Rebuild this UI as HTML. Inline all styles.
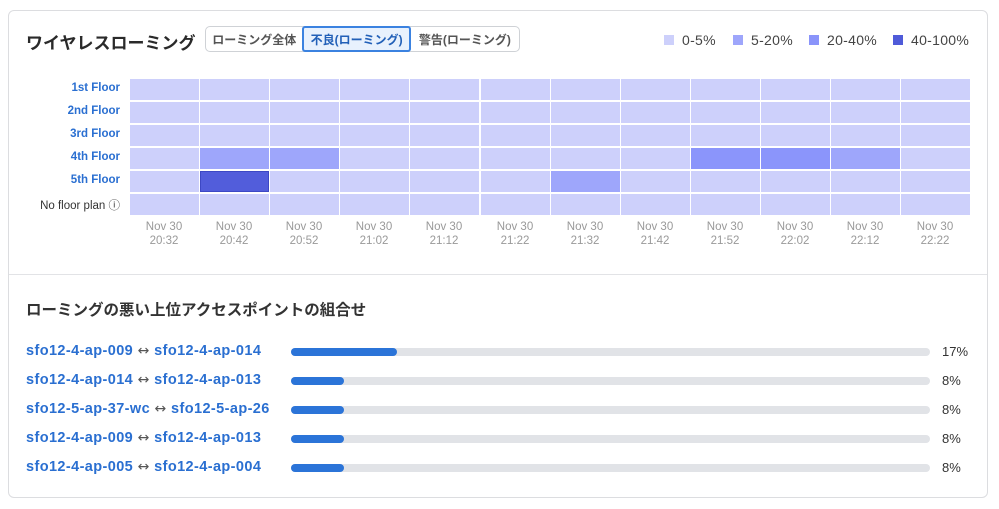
<!DOCTYPE html>
<html><head><meta charset="utf-8"><style>
body{margin:0;width:999px;height:509px;background:#fff;font-family:"Liberation Sans","Noto Sans CJK JP",sans-serif;position:relative;overflow:hidden}
.card{position:absolute;left:8px;top:10px;width:980px;height:488px;border:1px solid #dcdde0;border-radius:6px;box-sizing:border-box}
.abs{position:absolute}
.title{left:26px;top:29px;font-size:17px;font-weight:bold;color:#2a2a2a}
.seg{left:205px;top:26px;height:26px;width:315px;border:1px solid #cfd2d6;border-radius:5px;box-sizing:border-box;display:flex;font-size:12px;font-weight:bold;color:#555}
.seg div{display:flex;align-items:center;justify-content:center}
.seg .on{border:2px solid #3b82e0;background:#e8f1fd;color:#2260b8;border-radius:3px;margin:-1px 0}
.leg{top:32px;font-size:14px;color:#444;display:flex;align-items:center;letter-spacing:0.3px}
.leg span{display:inline-block;width:10px;height:10px;margin-right:8px}
.cell{position:absolute;height:21px;width:69px;background:#cdd0fb}
.fl{position:absolute;right:879px;font-size:11.5px;font-weight:bold;color:#2a6fd1;text-align:right;white-space:nowrap}
.tm{position:absolute;top:220px;width:70px;text-align:center;font-size:11.5px;color:#999;line-height:14px}
.row{position:absolute;left:26px;font-size:14.5px;font-weight:bold;color:#2a6fd1;white-space:nowrap;letter-spacing:0.4px}
.row i{font-style:normal;color:#555;font-weight:normal;font-family:"DejaVu Sans",sans-serif;font-size:14px}
.bar{position:absolute;left:291px;width:639px;height:8px;border-radius:4px;background:#e1e3e7}
.bar b{display:block;height:8px;border-radius:4px;background:#2b74d8}
.pc{position:absolute;left:942px;font-size:13px;color:#333}
</style></head><body>
<div class="card"></div>
<div class="abs title">ワイヤレスローミング</div>
<div class="abs seg"><div style="width:98px">ローミング全体</div><div class="on" style="width:106px">不良(ローミング)</div><div style="width:110px">警告(ローミング)</div></div>
<div class="abs leg" style="left:664px"><span style="background:#cdd0fb"></span>0-5%</div>
<div class="abs leg" style="left:733px"><span style="background:#9ea6fb"></span>5-20%</div>
<div class="abs leg" style="left:809px"><span style="background:#8a94fa"></span>20-40%</div>
<div class="abs leg" style="left:893px"><span style="background:#4f5bd9"></span>40-100%</div>
<div id="g"></div>
<div class="fl" style="top:82px">1st Floor</div>
<div class="fl" style="top:105px">2nd Floor</div>
<div class="fl" style="top:128px">3rd Floor</div>
<div class="fl" style="top:151px">4th Floor</div>
<div class="fl" style="top:174px">5th Floor</div>
<div class="fl" style="top:197px;font-weight:normal;color:#333">No floor plan ⓘ</div>
<script>
var g=document.getElementById('g'),h='';
var sp={'3,1':'#9ea6fb','3,2':'#9ea6fb','3,8':'#8b95fb','3,9':'#8b95fb','3,10':'#9ea6fb','4,1':'#525ddb','4,6':'#9ea6fb'};
var t=['20:32','20:42','20:52','21:02','21:12','21:22','21:32','21:42','21:52','22:02','22:12','22:22'];
for(var c=0;c<12;c++){var x=Math.round(130+c*70.1);
for(var r=0;r<6;r++){var y=79+r*23;h+='<div class="cell" style="left:'+x+'px;top:'+y+'px;'+(sp[r+','+c]?'background:'+sp[r+','+c]:'')+(r==4&&c==1?';outline:1px solid #3d48c4;outline-offset:-1px':'')+'"></div>';}
h+='<div class="tm" style="left:'+(x-1)+'px">Nov 30<br>'+t[c]+'</div>';}
g.innerHTML=h;
</script>
<div class="abs" style="left:9px;top:274px;width:978px;height:1px;background:#e2e3e6"></div>
<div class="abs" style="left:26px;top:298px;font-size:15.5px;font-weight:bold;color:#333">ローミングの悪い上位アクセスポイントの組合せ</div>
<div class="row" style="top:343px">sfo12-4-ap-009 <i>↔</i> sfo12-4-ap-014</div>
<div class="row" style="top:372px">sfo12-4-ap-014 <i>↔</i> sfo12-4-ap-013</div>
<div class="row" style="top:401px">sfo12-5-ap-37-wc <i>↔</i> sfo12-5-ap-26</div>
<div class="row" style="top:430px">sfo12-4-ap-009 <i>↔</i> sfo12-4-ap-013</div>
<div class="row" style="top:459px">sfo12-4-ap-005 <i>↔</i> sfo12-4-ap-004</div>
<div class="bar" style="top:348px"><b style="width:106px"></b></div>
<div class="bar" style="top:377px"><b style="width:53px"></b></div>
<div class="bar" style="top:406px"><b style="width:53px"></b></div>
<div class="bar" style="top:435px"><b style="width:53px"></b></div>
<div class="bar" style="top:464px"><b style="width:53px"></b></div>
<div class="pc" style="top:344px">17%</div>
<div class="pc" style="top:373px">8%</div>
<div class="pc" style="top:402px">8%</div>
<div class="pc" style="top:431px">8%</div>
<div class="pc" style="top:460px">8%</div>
</body></html>
